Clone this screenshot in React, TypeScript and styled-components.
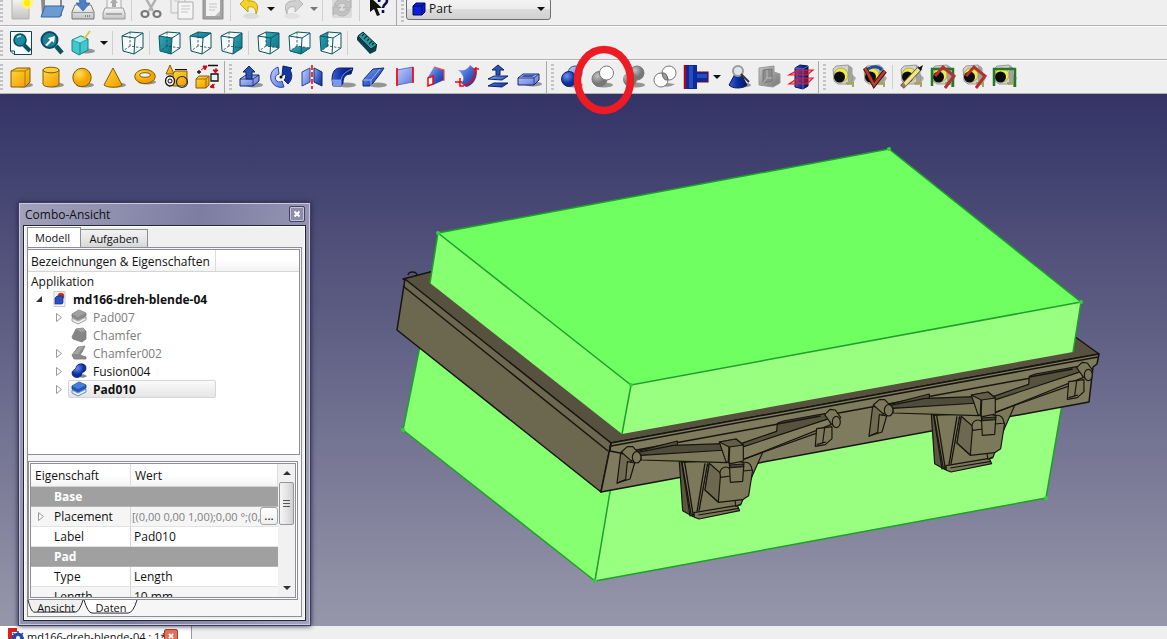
import React from "react";
import styled, { createGlobalStyle, css } from "styled-components";

const Global = createGlobalStyle`
  * { box-sizing: border-box; }
  body { margin: 0; overflow: hidden; background: #efefef; }
  body, button, select { font-family: "Open Sans", "Noto Sans", sans-serif; font-size: 12px; color: #111; }
  button { padding: 0; border: 0; background: none; }
`;

/* ---------- page frame ---------- */

const Page = styled.div`
  display: flex;
  flex-direction: column;
  height: 100vh;
  overflow: hidden;
`;

const ToolbarArea = styled.header`
  position: relative;
  margin-top: -8px;
  flex: none;
`;

const Toolbar = styled.div`
  display: flex;
  height: 34px;
  background: #efefef;
  border-top: 1px solid #fbfbfb;
  border-bottom: 1px solid #b2b2b4;
`;

const Group = styled.div<{ $last?: boolean }>`
  display: flex;
  align-items: center;
  padding-right: 2px;
  border-right: ${(p) => (p.$last ? "0" : "1px solid #a9a9a9")};
`;

const Handle = styled.span<{ $first?: boolean }>`
  width: 3px;
  height: 26px;
  margin: ${(p) => (p.$first ? "0 2px 0 0" : "0 2px 0 4px")};
  background: repeating-linear-gradient(#c2c2c6 0 2px, transparent 2px 4px);
`;

const ToolButton = styled.button`
  display: grid;
  place-items: center;
  width: 31px;
  height: 30px;
  svg { width: 24px; height: 24px; display: block; overflow: visible; }
`;

const MenuButton = styled.button`
  width: 12px;
  height: 30px;
  display: grid;
  place-items: center;
`;

const Triangle = styled.i<{ $dim?: boolean }>`
  border: 4px solid transparent;
  border-bottom: 0;
  border-top-color: ${(p) => (p.$dim ? "#777" : "#111")};
`;

const Separator = styled.span`
  width: 1px;
  height: 24px;
  margin: 0 3px 0 2px;
  background: #cfcfcf;
`;

const Workbench = styled.label`
  display: flex;
  align-items: center;
  width: 145px;
  height: 22px;
  padding: 0 5px;
  border: 1px solid #707070;
  border-radius: 3px;
  background: linear-gradient(#f4f4f4, #ececec 50%, #dcdcdc 50%, #d0d0d0);
  svg { width: 14px; height: 14px; flex: none; }
`;

const WorkbenchSelect = styled.select`
  flex: 1;
  appearance: none;
  border: 0;
  background: none;
  padding: 0 0 0 3px;
  line-height: 18px;
`;

const Ring = styled.svg`
  position: absolute;
  left: 573px;
  top: 53px;
  width: 62px;
  height: 70px;
  z-index: 5;
  pointer-events: none;
`;

const Viewport = styled.main`
  position: relative;
  flex: 1;
  min-height: 0;
  background: linear-gradient(#333366, #9797ab);
`;

const Scene = styled.svg`
  display: block;
  width: 100%;
  height: 100%;
`;

const DocumentBar = styled.nav`
  flex: none;
  height: 13px;
  overflow: hidden;
  background: #efefef;
`;

const DocumentTab = styled.div`
  display: flex;
  align-items: center;
  width: 192px;
  height: 20px;
  padding-left: 6px;
  background: #fff;
  border-right: 1px solid #999;
  > svg { width: 18px; height: 18px; }
`;

const DocumentName = styled.button`
  margin-left: 3px;
  width: 137px;
  text-align: left;
  font-size: 11px;
  white-space: nowrap;
`;

const DocumentClose = styled.button`
  width: 14px;
  height: 14px;
  border: 1px solid #a84030;
  border-radius: 2px;
  background: #e2725b;
  svg { display: block; width: 12px; height: 12px; }
`;

/* ---------- combo view window ---------- */

const Panel = styled.section`
  position: absolute;
  left: 18px;
  top: 108px;
  width: 293px;
  padding: 0 4px 4px;
  border: 1px solid #3c3c5a;
  background: linear-gradient(100deg, #a2a2bc, #7d7da2 50%, #a3a3bd);
  box-shadow: inset 0 0 0 1px #c9c9dc, 0 0 5px #26264c;
`;

const TitleBar = styled.div`
  display: flex;
  align-items: center;
  justify-content: space-between;
  height: 22px;
  padding: 0 1px 0 2px;
`;

const Title = styled.h1`
  margin: 0;
  font-size: 12px;
  font-weight: 400;
`;

const CloseButton = styled.button`
  width: 16px;
  height: 16px;
  border: 1px solid #41415e;
  border-radius: 2px;
  box-shadow: inset 0 0 0 1px #c4c4d8;
  background: #8c8cab;
  svg { display: block; width: 14px; height: 14px; }
`;

const PanelBody = styled.div`
  padding: 1px 3px 3px;
  border: 1px solid #24243a;
  background: #f0f0f0;
  box-shadow: inset 0 0 0 1px #fff;
`;

const TabRow = styled.div`
  display: flex;
  align-items: flex-end;
  height: 20px;
`;

const PanelTab = styled.button<{ $active?: boolean }>`
  border: 1px solid #8c8e94;
  border-bottom: 0;
  font-size: 11px;
  ${(p) =>
    p.$active
      ? css`
          width: 54px;
          height: 20px;
          padding-right: 3px;
          background: #fff;
        `
      : css`
          width: 67px;
          height: 18px;
          border-left: 0;
          background: linear-gradient(#f2f2f2, #e8e8e8 50%, #d6d6d6);
        `}
`;

const Pane = styled.div`
  padding: 1px 1px 1px 0;
  border: 1px solid #8c8e94;
  background: #f6f6f6;
`;

const TreeBox = styled.div`
  height: 206px;
  border: 1px solid #8c8e94;
  border-left: 0;
  background: #fff;
`;

const TreeHeader = styled.div`
  display: flex;
  height: 22px;
  border-bottom: 1px solid #d5d5d5;
  background: linear-gradient(#fff 50%, #f3f3f4);
  line-height: 23px;
`;

const TreeHeading = styled.span`
  width: 188px;
  padding-left: 3px;
  white-space: nowrap;
  border-right: 1px solid #dcdcdc;
`;

const Tree = styled.ul`
  margin: 0;
  padding: 0;
  list-style: none;
`;

const TreeRow = styled.li<{ $level: number }>`
  display: flex;
  align-items: center;
  height: 18px;
  padding-left: ${(p) => [3, 5, 25][p.$level]}px;
`;

const Expander = styled.span`
  width: 15px;
  height: 18px;
  flex: none;
  svg { display: block; width: 14px; height: 18px; }
`;

const TreeItem = styled.button<{ $dim?: boolean; $bold?: boolean; $selected?: boolean }>`
  display: flex;
  align-items: center;
  gap: 6px;
  height: 18px;
  padding: 0 0 0 2px;
  border: 1px solid transparent;
  border-radius: 2px;
  color: ${(p) => (p.$dim ? "#7c7c7c" : "#111")};
  font-weight: ${(p) => (p.$bold ? 700 : 400)};
  ${(p) =>
    p.$selected &&
    css`
      width: 148px;
      border-color: #d6d6d6;
      background: linear-gradient(#fafafa, #e6e6e6);
    `}
  svg { width: 16px; height: 16px; }
`;

const PropertyFrame = styled.div`
  width: 270px;
  margin-top: 6px;
  padding: 1px;
  border: 1px solid #8c8e94;
  background: #fff;
`;

const PropertyView = styled.div`
  display: flex;
  height: 135px;
  border: 1px solid #8c8e94;
  overflow: hidden;
`;

const Properties = styled.table`
  flex: 1;
  width: 100%;
  align-self: flex-start;
  table-layout: fixed;
  border-collapse: separate;
  border-spacing: 0;
  th, td { padding: 0; text-align: left; font-weight: 400; height: 20px; line-height: 19px; white-space: nowrap; overflow: hidden; }
`;

const HeadCell = styled.th<{ $first?: boolean }>`
  && {
    width: ${(p) => (p.$first ? "100px" : "auto")};
    height: 23px;
    padding-left: 4px;
    border-right: 1px solid #ddd;
    border-bottom: 1px solid #d5d5d5;
    background: linear-gradient(#fff 50%, #f3f3f4);
  }
`;

const GroupCell = styled.th`
  && {
    padding-left: 23px;
    border-bottom: 1px solid #b5b5b5;
    background: #a0a0a0;
    color: #fff;
    font-weight: 700;
  }
`;

const NameCell = styled.th<{ $alt?: boolean }>`
  && {
    border-right: 1px solid #d5d5d5;
    border-bottom: 1px solid #e2e2e2;
    background: ${(p) => (p.$alt ? "#f5f5f5" : "#fff")};
  }
`;

const NameContent = styled.span`
  display: flex;
  padding-left: 4px;
  height: 19px;
`;

const Indent = styled.span`
  width: 19px;
  flex: none;
  svg { display: block; width: 14px; height: 18px; }
`;

const ValueCell = styled.td<{ $alt?: boolean }>`
  && {
    padding-left: 3px;
    border-bottom: 1px solid #e2e2e2;
    background: ${(p) => (p.$alt ? "#f5f5f5" : "#fff")};
  }
`;

const PlacementValue = styled.span`
  display: flex;
  margin-left: -2px;
  color: #808080;
  span { flex: 1; min-width: 0; overflow: hidden; font-size: 11px; }
`;

const MoreButton = styled.button`
  width: 18px;
  height: 18px;
  border: 1px solid #a5a5a5;
  border-radius: 3px;
  background: linear-gradient(#fff, #eee);
  line-height: 12px;
`;

const ScrollBar = styled.div`
  display: flex;
  flex: none;
  flex-direction: column;
  align-items: center;
  width: 17px;
  background: #f1f1f1;
`;

const ScrollButton = styled.button<{ $down?: boolean }>`
  width: 17px;
  height: 18px;
  display: grid;
  place-items: center;
  margin-top: ${(p) => (p.$down ? "auto" : "0")};
  i {
    border: 4px solid transparent;
    ${(p) => (p.$down ? "border-bottom: 0; border-top-color: #333;" : "border-top: 0; border-bottom-color: #333;")}
  }
`;

const Thumb = styled.div`
  display: grid;
  place-items: center;
  width: 15px;
  height: 43px;
  border: 1px solid #979797;
  border-radius: 2px;
  background: linear-gradient(90deg, #f5f5f5, #e5e5e5 50%, #cfcfcf);
  span { width: 7px; height: 8px; background: repeating-linear-gradient(#555 0 1px, transparent 1px 3px); }
`;

const BottomTabs = styled.div`
  display: flex;
  height: 15px;
`;

const BottomTab = styled.button<{ $active?: boolean }>`
  position: relative;
  width: ${(p) => (p.$active ? "54px" : "56px")};
  height: 14px;
  line-height: 13px;
  font-size: 11px;
  white-space: nowrap;
  svg { position: absolute; left: 0; top: 0; width: 100%; height: 100%; overflow: visible; }
  span { position: relative; }
`;

/* ---------- icons ---------- */

type G = { children?: React.ReactNode };
const Ic = ({ children }: G) => <svg viewBox="0 0 24 24" aria-hidden="true">{children}</svg>;
const Shade = ({ x = 14, y = 20 }: { x?: number; y?: number }) => <ellipse cx={x} cy={y} rx="9" ry="2.6" fill="#777" opacity=".75" />;

const PaintDefs = styled.svg`
  position: absolute;
  width: 0;
  height: 0;
`;

const SharedPaint = () => (
  <PaintDefs aria-hidden="true">
    <defs>
      <linearGradient id="yel" x1="0" y1="0" x2="1" y2="1"><stop stopColor="#ffd83a" /><stop offset="1" stopColor="#f09a00" /></linearGradient>
      <linearGradient id="blu" x1="0" y1="0" x2="1" y2="1"><stop stopColor="#8fb2f4" /><stop offset=".5" stopColor="#3c62cf" /><stop offset="1" stopColor="#102a86" /></linearGradient>
      <linearGradient id="dblu" x1="0" y1="0" x2="1" y2="0"><stop stopColor="#3a5fc9" /><stop offset=".5" stopColor="#0b2da0" /><stop offset="1" stopColor="#04175f" /></linearGradient>
      <linearGradient id="lav" x1="0" y1="0" x2="1" y2="1"><stop stopColor="#c3cdfa" /><stop offset="1" stopColor="#5b77dc" /></linearGradient>
      <linearGradient id="gry" x1="0" y1="0" x2="1" y2="1"><stop stopColor="#c4c4c4" /><stop offset="1" stopColor="#777" /></linearGradient>
      <linearGradient id="pale" x1="0" y1="0" x2="0" y2="1"><stop stopColor="#fafafa" /><stop offset="1" stopColor="#c2c2c2" /></linearGradient>
      <linearGradient id="teal" x1="0" y1="0" x2="1" y2="1"><stop stopColor="#2fa9b8" /><stop offset="1" stopColor="#0f7488" /></linearGradient>
      <radialGradient id="ballY" cx=".35" cy=".3"><stop stopColor="#ffe057" /><stop offset="1" stopColor="#f5a300" /></radialGradient>
      <radialGradient id="ballB" cx=".35" cy=".3"><stop stopColor="#6c94f2" /><stop offset="1" stopColor="#0b2c9c" /></radialGradient>
      <radialGradient id="ballG" cx=".35" cy=".3"><stop stopColor="#c2c2c2" /><stop offset="1" stopColor="#777" /></radialGradient>
    </defs>
  </PaintDefs>
);

const NewDoc = () => <Ic><path d="M3 0h17v22H3z" fill="url(#pale)" stroke="#b5b5a5" /><circle cx="18" cy="6" r="6" fill="#fff26a" opacity=".8" /><circle cx="18" cy="6" r="3" fill="#ffea00" /></Ic>;
const OpenDoc = () => <Ic><path d="M1 2h10l2-3h9v20H2z" fill="#8a8a8a" /><path d="M5 0h15v10H5z" fill="#eee" /><path d="M5 9h19l-4 11H1z" fill="#6c9ad2" stroke="#3465a4" /></Ic>;
const SaveDoc = () => <Ic><path d="M4 8h16l3 7v7H1v-7z" fill="url(#pale)" stroke="#777" /><path d="M2 15.500h20" stroke="#999" /><path d="M4 0c6-3 11 0 11 6h4l-7 8-7-8h4c0-3-2-5-5-6z" fill="#4c7fc4" stroke="#2b5794" strokeWidth=".7" /><path d="M14 19h6" stroke="#888" strokeDasharray="1 1" strokeWidth="2" /></Ic>;
const PrintDoc = () => <Ic><path d="M5 0h14v12H5z" fill="#f3f3f3" stroke="#aaa" /><path d="M12 1l4 5h-2v4h-4V6H8z" fill="#aaa" /><path d="M3 11h18l2 5v6H1v-6z" fill="url(#pale)" stroke="#9a9a9a" /><path d="M4 17h16" stroke="#aaa" strokeWidth="2" /></Ic>;
const Cut = () => <Ic><path d="M6 0l8 14M18 0l-8 14" stroke="#b0b0b0" strokeWidth="2.400" /><ellipse cx="6" cy="17" rx="3.500" ry="3" fill="none" stroke="#777" strokeWidth="2.200" /><ellipse cx="18" cy="17" rx="3.500" ry="3" fill="none" stroke="#777" strokeWidth="2.200" /></Ic>;
const Copy = () => <Ic><path d="M1 0h14v16H1z" fill="#eee" stroke="#bbb" /><path d="M8 5h15v17H8z" fill="#f5f5f5" stroke="#aaa" /><path d="M11 9h9M11 12h9M11 15h7M4 4h6" stroke="#c4c4c4" /></Ic>;
const Paste = () => <Ic><path d="M2 0h20v22H2z" fill="#a3a3a3" stroke="#8c8c8c" /><path d="M5 3h14v16H5z" fill="#f2f2f2" /><path d="M8 7h8M8 10h8M8 13h6" stroke="#c4c4c4" /><path d="M14 19l5-5v5z" fill="#bbb" /></Ic>;
const Undo = () => <Ic><ellipse cx="13" cy="19" rx="8" ry="3" fill="#ddd" /><path d="M2 7l8-8v5c8-1 12 4 8 13 0-6-3-8-8-7v5z" fill="#f3d22d" stroke="#c7a100" /></Ic>;
const Redo = () => <Ic><ellipse cx="11" cy="19" rx="8" ry="3" fill="#e2e2e2" /><path d="M22 7l-8-8v5C6 3 2 8 6 17c0-6 3-8 8-7v5z" fill="#d0d0d0" stroke="#b6b6b6" /></Ic>;
const Refresh = () => <Ic><rect x="2" y="0" width="20" height="21" rx="2" fill="#dadada" /><path d="M4 9c1-8 11-9 14-4l3-2v8h-8l3-3c-3-3-7-2-8 1zM20 12c-1 8-11 9-14 4l-3 2v-8h8l-3 3c3 3 7 2 8-1z" fill="#c2c2c2" stroke="#a4a4a4" strokeWidth=".6" /></Ic>;
const WhatsThis = () => <Ic><path d="M3 0v15l4-3 3 7 3-1-3-7h5z" fill="#111" /><path d="M12 5c0-6 8-5 8-1 0 3-4 3-4 7M16 13v3" stroke="#0a0a5e" strokeWidth="2.600" fill="none" /></Ic>;

const FitAll = () => <Ic><path d="M1.500.500h21v23H5l-3.500-3.500z" fill="#f7fbfb" stroke="#0d4650" /><path d="M1.500 20h4v3.500" fill="none" stroke="#0d4650" /><circle cx="11" cy="9" r="6" fill="#1a8ca4" stroke="#0b4b5c" strokeWidth="1.600" /><path d="M8 6.500q2-2 4-1.500" stroke="#b9edf5" strokeWidth="1.500" fill="none" /><path d="M15 14l6 6" stroke="#0b5364" strokeWidth="4" /></Ic>;
const FitSelection = () => <Ic><circle cx="9.500" cy="9" r="8" fill="#1a8298" stroke="#0b4b5c" strokeWidth="2" /><path d="M5 14l5-5-2-2 7-2-1 7-2-2-5 5z" fill="#fff" /><path d="M16 15l6 7" stroke="#0b5364" strokeWidth="4.500" /></Ic>;
const DrawStyle = () => <Ic><Shade x={15} y={20} /><path d="M1 9l9-4 7 3v11l-9 5-7-4z" fill="#3ec9cc" stroke="#237f85" /><path d="M1 9l9-4 7 3-8 4z" fill="#8ff2ea" stroke="#237f85" strokeWidth=".7" /><path d="M9 12v11" stroke="#237f85" /><path d="M13 8l6-8" stroke="#d9c63b" strokeWidth="1.800" /></Ic>;

const cubeFaces: Record<string, string> = {
  axo: "",
  front: "2 5 15 7 14 23 3 20",
  top: "2 5 10 1 23 2 15 7",
  right: "15 7 23 2 23 17 14 23",
  rear: "10 1 23 2 23 17 10 15",
  bottom: "3 20 10 15 23 17 14 23",
  left: "2 5 10 1 10 15 3 20",
};
const ViewCube = ({ face }: { face: string }) => (
  <Ic>
    <path d="M2 5l8-4 13 1v15l-9 6-11-3z" fill="#f7fafa" />
    <polygon points={cubeFaces[face]} fill="url(#teal)" />
    <path d="M10 1v14l13 2M10 15l-7 5" fill="none" stroke="#27434a" strokeWidth=".8" strokeDasharray="2.500 1.500" />
    <path d="M2 5l8-4 13 1v15l-9 6-11-3zM2 5l13 2 8-5M15 7l-1 16" fill="none" stroke="#0c5563" strokeWidth="1" strokeLinejoin="round" />
  </Ic>
);
const Measure = () => <Ic><path d="M2 6l6-5 14 14-1 5-6 3L2 9z" fill="#0c4149" /><path d="M3 5l5-4 14 13-6 4z" fill="#279aa8" stroke="#0a2a30" /><path d="M9 3l-2 2M12 5l-3 3M14 8l-2 2M17 10l-3 3M19 12l-2 2" stroke="#05252b" strokeWidth="1.100" /></Ic>;

const Box = () => <Ic><Shade x={15} /><path d="M2 6l6-3h13v14l-5 5H2z" fill="url(#yel)" stroke="#845d00" /><path d="M2 6h14v16M16 6l5-3" fill="none" stroke="#9b6b00" strokeWidth=".8" /></Ic>;
const Cylinder = () => <Ic><Shade x={15} /><path d="M3 5v14c0 4 16 4 16 0V5" fill="url(#yel)" stroke="#845d00" /><ellipse cx="11" cy="5" rx="8" ry="2.800" fill="#ffd23a" stroke="#845d00" /></Ic>;
const Sphere = () => <Ic><Shade x={14} /><circle cx="11" cy="12.500" r="9.200" fill="url(#ballY)" stroke="#845d00" /></Ic>;
const Cone = () => <Ic><Shade x={15} /><path d="M11 3l9 17c-3 3-15 3-18 0z" fill="url(#yel)" stroke="#845d00" /></Ic>;
const Torus = () => <Ic><Shade x={14} y={17} /><ellipse cx="12" cy="11.500" rx="10.300" ry="7" fill="url(#ballY)" stroke="#845d00" /><ellipse cx="12" cy="10" rx="5.500" ry="2.300" fill="#eee" stroke="#845d00" /></Ic>;
const Primitives = () => <Ic><path d="M6 0l4 9H2z" fill="url(#yel)" stroke="#845d00" /><path d="M9 9l2-3h12v12l-3 3H9z" fill="url(#yel)" stroke="#845d00" /><path d="M11 4.500h12" stroke="#111" /><ellipse cx="6" cy="16" rx="4.500" ry="5" fill="#efefef" stroke="#111" strokeWidth="1.300" /><circle cx="6" cy="16" r="2" fill="none" stroke="#111" /><circle cx="18" cy="17" r="5.500" fill="none" stroke="#26264f" strokeWidth="1.200" /></Ic>;
const ShapeBuilder = () => <Ic><path d="M1 14l3-3h10v9l-3 3H1z" fill="url(#yel)" stroke="#845d00" /><path d="M1 14h10v9M11 14l3-3" fill="none" stroke="#845d00" strokeWidth=".8" /><path d="M2 7h4M4 5v4M13 .500h10M16 9h7v7h-7z" stroke="#111" fill="none" strokeWidth="1.300" /><path d="M6 5l4-3M8 1l4 0-2 4zM21 3v3M18 5h5l-2.500 3zM20 19l-3 2M19 23l-4-1 3-3z" fill="#d40016" stroke="#d40016" /></Ic>;

const Extrude = () => <Ic><Shade x={16} /><path d="M2 14l6-4h13v6l-6 5H2z" fill="url(#lav)" stroke="#14286f" /><path d="M2 14h13l6-4M15 14v7" fill="none" stroke="#14286f" strokeWidth=".8" /><path d="M11 1l6 6h-3v7H8V7H5z" fill="#2855b5" stroke="#12265f" /></Ic>;
const Revolve = () => <Ic><path d="M9 2a10 10 0 1 0 6 20l-2-6a4 4 0 1 1-3-7z" fill="url(#lav)" stroke="#2a4db1" /><path d="M14 1l9 2-2 2c3 5 2 10-2 14l-4-4c2-2 2-4 1-6l-3 2z" fill="#1536a0" stroke="#0d2371" /><circle cx="12" cy="12" r="1.500" fill="#111" /></Ic>;
const Mirror = () => <Ic><path d="M2 7l8-4v14l-8 4z" fill="url(#lav)" stroke="#27469b" /><path d="M14 3l8 4v14l-8-4z" fill="url(#blu)" stroke="#12265f" /><path d="M12 0v24" stroke="#f00" strokeWidth="1.600" strokeDasharray="5 2" /></Ic>;
const Fillet = () => <Ic><Shade x={16} /><path d="M1 15C1 7 4 3 9 3h13l-2 6c-5 0-8 3-8 9l-2 3H2z" fill="url(#dblu)" stroke="#10236a" /><path d="M1 15h9v6H2z" fill="#7d98ea" /><path d="M1 15h9v6M10 15C11 10 14 7 21 4" fill="none" stroke="#91aaf0" strokeWidth=".8" /></Ic>;
const Chamfer = () => <Ic><Shade x={16} /><path d="M1 15L11 4l11-1-4 6-7 9-3 3H1z" fill="url(#blu)" stroke="#10236a" /><path d="M1 15h8l9-11M9 15v6" fill="none" stroke="#b8c8ff" strokeWidth=".8" /></Ic>;
const RuledSurface = () => <Ic><path d="M4 5l16-3v15L4 20z" fill="url(#lav)" stroke="#5672ce" /><path d="M4 3v18M20 2v16" stroke="#f00" strokeWidth="1.600" /></Ic>;
const Loft = () => <Ic><path d="M4 12l6-10 10 3v10L9 20z" fill="url(#blu)" /><path d="M10 2l10 3v11" stroke="#f44" fill="none" strokeWidth="1.200" /><path d="M4 13l5-2v8l-5 2z" fill="#fff" stroke="#f00" strokeWidth="1.500" /></Ic>;
const Sweep = () => <Ic><path d="M3 5c7 1 10-1 12-5l7 6c0 9-5 15-11 16l-5-4c4-3 3-8-3-13z" fill="url(#blu)" /><path d="M0 17h7M5 13v8h4M9 20c7 0 12-9 12-18M18 4h6" stroke="#f00" fill="none" strokeWidth="1.500" /></Ic>;
const Offset = () => <Ic><path d="M12 0l6 5h-4v5h-4V5H6z" fill="#2855b5" stroke="#12265f" /><path d="M2 14l6-3h14l-6 4zM2 21l6-3h14l-6 4z" fill="url(#blu)" stroke="#10236a" /></Ic>;
const Thickness = () => <Ic><Shade x={16} y={19} /><path d="M1 13l5-4h16v6l-5 5H1z" fill="url(#lav)" stroke="#14286f" /><path d="M1 13h16v7M17 13l5-4" fill="none" stroke="#14286f" strokeWidth=".8" /><path d="M4 12l3-2h11l-3 2z" fill="#3457b8" /></Ic>;

const BooleanOp = () => <Ic><Shade /><circle cx="15" cy="8" r="7" fill="url(#lav)" stroke="#2b4db0" /><circle cx="9" cy="14" r="7.500" fill="url(#ballB)" stroke="#12265f" /></Ic>;
const CutOp = () => <Ic><Shade x={13} y={20} /><circle cx="8.500" cy="14" r="7.500" fill="url(#ballG)" stroke="#777" /><circle cx="15.500" cy="8" r="7" fill="#fff" stroke="#777" /></Ic>;
const UnionOp = () => <Ic><Shade x={14} y={20} /><circle cx="15" cy="8" r="7" fill="url(#ballG)" stroke="#777" /><circle cx="8" cy="14.500" r="7" fill="url(#ballG)" /></Ic>;
const CommonOp = () => <Ic><path d="M9 21q8 2 13-2l-7-1z" fill="#999" /><circle cx="16" cy="8" r="7" fill="#fff" stroke="#777" /><circle cx="8" cy="15" r="7" fill="#fff" stroke="#777" /><path d="M9 8q5-1 6 7-5 1-6-7z" fill="#999" stroke="#666" /></Ic>;
const Join = () => <Ic><path d="M0 0h13v7h11v10H13v7H0z" fill="#0c2a9c" /><path d="M5 1h4v22H5zM13 9h10v4H13z" fill="#2f5ed0" opacity=".7" /><path d="M1 0v24" stroke="#a00b24" strokeWidth="2.500" /><path d="M13 7h11v10H13" fill="none" stroke="#6c0d33" strokeWidth="1.200" /></Ic>;
const Check = () => <Ic><Shade x={15} /><path d="M8 9h6l6 11c-4 4-15 4-18 0z" fill="url(#dblu)" stroke="#0c1d60" /><circle cx="11" cy="6" r="5" fill="#dfe3ea" stroke="#9b9b9b" strokeWidth="2" /><path d="M14 9l8 8" stroke="#333" strokeWidth="2" /></Ic>;
const CrossSection = () => <Ic><path d="M1 3l15-2v6l6 2v9l-7 4-14-2z" fill="url(#gry)" stroke="#999" /><path d="M5 5l9-1v12l-9 2z" fill="#8c8c8c" stroke="#777" /><path d="M5 18l4-5h5M9 13V5" fill="none" stroke="#bbb" /></Ic>;
const Slices = () => <Ic><path d="M6 3l5-3 8 1v20l-5 3-8-2z" fill="url(#dblu)" stroke="#061448" /><path d="M6 3l8 1 5-3M14 4v20" fill="none" stroke="#496dd2" /><path d="M0 10h18l6-5H9zM0 19h18l6-6H9z" fill="#f22" fillOpacity=".4" stroke="#f01428" strokeWidth="1.200" /></Ic>;

const Tape = () => (
  <>
    <path d="M17 6l7 7-4 7h-5z" fill="#aaa" />
    <path d="M1 4l3-3 12-1 4 3v13l-4 3H6l-4-3z" fill="#d2d2d2" stroke="#858585" strokeWidth=".8" />
    <path d="M16 0l4 3v13l-4 3V4z" fill="#a2a2a2" />
    <circle cx="9" cy="10" r="7" fill="#efe94a" stroke="#8b8830" strokeWidth=".6" />
    <circle cx="7.500" cy="12" r="5.500" fill="#0c0c0c" />
    <path d="M14 18h7v4" stroke="#a9a555" strokeWidth="2" fill="none" />
  </>
);
const RedFrame = () => <path d="M4 11l8-9 11 9-9 12" fill="none" stroke="#b23131" strokeWidth="3" />;
const GreenFrame = () => <path d="M1 21V4h21v18" fill="none" stroke="#227a28" strokeWidth="2.500" />;
const MeasureLinear = () => <Ic><Tape /></Ic>;
const MeasureAngular = () => <Ic><Tape /><path d="M5 4q8-5 14 1" stroke="#1a4aa2" fill="none" strokeWidth="3" /><path d="M2 3l9 17L22 6" fill="none" stroke="#3c1410" strokeWidth="4.500" /><path d="M2 3l9 17L22 6" fill="none" stroke="#bd3d32" strokeWidth="2.500" /></Ic>;
const MeasureClear = () => <Ic><Tape /><path d="M2 22L20 3" stroke="#555" strokeWidth="5" /><path d="M4 20L19 4" stroke="#efe584" strokeWidth="3.500" /><path d="M18 3l5-3-2 6z" fill="#111" /><path d="M1 20l3-2 2 3-2 2z" fill="#a7745d" /></Ic>;
const MeasureToggleAll = () => <Ic><Tape /><GreenFrame /><RedFrame /></Ic>;
const MeasureToggle3d = () => <Ic><Tape /><RedFrame /></Ic>;
const MeasureToggleDelta = () => <Ic><Tape /><GreenFrame /></Ic>;

const SmallPad = ({ dim }: { dim?: boolean }) => <svg viewBox="0 0 16 16"><path d="M1 9l6 3 8-4v3l-8 4-6-3z" fill={dim ? "#eee" : "#e8eefc"} stroke={dim ? "#888" : "#4b6fbd"} strokeWidth=".8" /><path d="M1 5l7-4 7 3v3l-8 4-6-3z" fill={dim ? "#8b8b8b" : "#1f5ac0"} stroke={dim ? "#777" : "#173b85"} strokeWidth=".8" /><path d="M1 5l7-4 7 3-8 4z" fill={dim ? "#a0a0a0" : "#4580dc"} /></svg>;
const SmallChamfer = () => <svg viewBox="0 0 16 16"><path d="M1 10l4-8 7-1 3 3v8l-4 3-9-3z" fill="#858585" stroke="#777" strokeWidth=".8" /><path d="M5 2l7-1 3 3-5 1z" fill="#a0a0a0" /></svg>;
const SmallChamferCut = () => <svg viewBox="0 0 16 16"><path d="M1 10l6-8 7-1-3 6-2 3 6 2v2H3z" fill="#8b8b8b" stroke="#777" strokeWidth=".8" /><path d="M2 9l6-7 5-1-6 8z" fill="#a5a5a5" /></svg>;
const SmallFusion = () => <svg viewBox="0 0 16 16"><path d="M8 14q6 2 8-1l-4-2z" fill="#888" /><path d="M5 5c0-5 10-6 10 0 0 4-3 4-4 5 0 6-10 6-10 0 0-3 3-3 4-5z" fill="url(#ballB)" stroke="#0b2577" strokeWidth=".8" /></svg>;
const SmallDocument = () => <svg viewBox="0 0 16 16"><path d="M3 .500h11v15H3z" fill="#f5f5f5" stroke="#c9c9c9" /><circle cx="10" cy="5" r="3.200" fill="#c92d26" /><path d="M4 7l2-2h6v7l-1 1H4z" fill="#2a4fc0" stroke="#122d7f" strokeWidth=".7" /></svg>;
const Collapsed = () => <svg viewBox="0 0 14 18"><path d="M3.500 5.500l5 4-5 4z" fill="#fff" stroke="#999" /></svg>;
const Expanded = () => <svg viewBox="0 0 14 18"><path d="M9 6v6H3z" fill="#333" /></svg>;
const Cross = ({ color }: { color: string }) => <svg viewBox="0 0 14 14"><path d="M4.500 4.500l5 5M9.500 4.500l-5 5" stroke={color} strokeWidth="2" /></svg>;

/* ---------- toolbar contents ---------- */

type Tool = [string, React.FC] | "sep" | "menu" | "menuDim";

const cube = (face: string): React.FC => () => <ViewCube face={face} />;

const fileTools: Tool[] = [
  ["Neu", NewDoc], ["Öffnen", OpenDoc], ["Speichern", SaveDoc], ["Drucken", PrintDoc], "sep",
  ["Ausschneiden", Cut], ["Kopieren", Copy], ["Einfügen", Paste], "sep",
  ["Rückgängig", Undo], "menu", ["Wiederherstellen", Redo], "menuDim", "sep",
  ["Aktualisieren", Refresh], "sep", ["Direkthilfe", WhatsThis],
];
const viewTools: Tool[] = [
  ["Alles einpassen", FitAll], ["Auswahl einpassen", FitSelection], ["Darstellung", DrawStyle], "menu", "sep",
  ["Axonometrisch", cube("axo")], "sep",
  ["Vorne", cube("front")], ["Oben", cube("top")], ["Rechts", cube("right")], "sep",
  ["Hinten", cube("rear")], ["Unten", cube("bottom")], ["Links", cube("left")], "sep",
  ["Abstand messen", Measure],
];
const partGroups: Tool[][] = [
  [["Würfel", Box], ["Zylinder", Cylinder], ["Kugel", Sphere], ["Kegel", Cone], ["Torus", Torus], ["Grundkörper", Primitives], ["Formgenerator", ShapeBuilder]],
  [["Extrudieren", Extrude], ["Rotieren", Revolve], ["Spiegeln", Mirror], ["Verrunden", Fillet], ["Fasen", Chamfer], ["Regelfläche", RuledSurface], ["Loft", Loft], ["Sweep", Sweep], ["Versatz", Offset], ["Dicke", Thickness]],
  [["Boolesche Operation", BooleanOp], ["Schneiden", CutOp], ["Vereinigung", UnionOp], ["Schnittmenge", CommonOp], ["Verbinden", Join], "menu", ["Geometrie prüfen", Check], ["Schnitt", CrossSection], ["Querschnitte", Slices]],
  [["Linear messen", MeasureLinear], ["Winkel messen", MeasureAngular], "sep", ["Messungen löschen", MeasureClear], ["Alle umschalten", MeasureToggleAll], ["3D umschalten", MeasureToggle3d], ["Delta umschalten", MeasureToggleDelta]],
];

const Tools = ({ items }: { items: Tool[] }) => (
  <>
    {items.map((item, i) => {
      if (item === "sep") return <Separator key={i} />;
      if (item === "menu" || item === "menuDim")
        return <MenuButton key={i} aria-label="Menü"><Triangle $dim={item === "menuDim"} /></MenuButton>;
      const [label, Icon] = item;
      return <ToolButton key={i} aria-label={label}><Icon /></ToolButton>;
    })}
  </>
);

/* ---------- 3D model ---------- */

/* One hinge with its two pins, drawn in units of a third of a scene unit. */
const Hinge = ({ x, y }: { x: number; y: number }) => (
  <g transform={`translate(${x} ${y}) scale(.3333)`} stroke="#16150f" strokeWidth="3.500" fill="#7c785a" strokeLinejoin="round">
    <path d="M238 185l10 147 32 18 30-10-22-155z" fill="#5a5642" />
    <path d="M245 187l78-4 167-30-32 72-36 90-135 25-17 8z" />
    <path d="M246 187l28 160M254 187l26 160M315 190l-24 145M323 190l-26 143" strokeWidth="4" />
    <path d="M282 338l130-22 7 16-122 25-14-5zM295 345l122-20" />
    <path d="M404 297l4 22 14-7" />
    <path d="M328 190l34 30 96-10-12 77-18 12-73 8-40-37z" />
    <path d="M328 190l34 30-7 86-40-36z" fill="#6d6950" />
    <path d="M360 220c0-18 26-28 32-8v16l-30 4zM420 190q34-12 36 22" />
    <path d="M388 188l12-8 32 8-4 56-37 3z" />
    <path d="M390 195l40-3v8l-40 3z" fill="#4d4a39" />
    <path d="M62 160l42 4-14 26-10 48-29 12z" fill="#706c51" />
    <path d="M82 185l-5 54-25 10 38-12 14-48z" />
    <path d="M112 154l120-31v14l-30 5" fill="#55513e" />
    <path d="M110 158l110-22 150-5 12 22-262 14z" fill="#4f4c3b" />
    <path d="M122 166l258-16v38l-256-8z" />
    <path d="M64 156l18-16 16 0 24 25-14 22-16-6z" />
    <ellipse cx="110" cy="172" rx="13" ry="17" />
    <path d="M425 130l105-36 2-24 18-7 125-22 12 18-260 86z" fill="#55523e" />
    <path d="M425 142l262-86 6 18-264 105z" fill="#827e60" />
    <path d="M430 178l258-92" />
    <path d="M532 72l130-24" fill="none" strokeWidth="5" />
    <path d="M358 126l50-9 22 18v48l-38 8-14-6z" />
    <path d="M358 126l50-9 22 18-42 6z" fill="#625e48" />
    <path d="M388 141l-2 48" strokeWidth="6" />
    <path d="M650 86l46-6 0 36-20 18-30 5zM674 84l-6 45M650 134l28-8" />
    <path d="M674 44l16-16 16 2 16 22-16 28-12-8z" />
    <ellipse cx="709" cy="66" rx="12" ry="17" />
  </g>
);

const Model = () => (
  <Scene viewBox="0 94 1167 532" preserveAspectRatio="xMinYMin slice" role="img" aria-label="3D-Modell">
    <g stroke="#1ea02a" strokeWidth="1.500" strokeLinejoin="round">
      <path d="M424 326L403 430l192 151 17-91z" fill="#86ff70" />
      <path d="M612 480l-17 101 451-83 18-105z" fill="#99ff80" />
    </g>
    <g stroke="#16150f" strokeWidth="1.500" strokeLinejoin="round">
      <path d="M403 279l31-8 640 65 25 18-488 89z" fill="#57523f" />
      <path d="M408 275c1-4 8-4 9 0" fill="none" />
      <path d="M405 279l206 164-10 49-204-162z" fill="#6b684f" />
      <path d="M403 286l205 165" fill="none" />
      <path d="M611 443l488-89-2 10-4 3-4 35-488 90z" fill="#7f7b5e" />
      <path d="M611 446l487-89M611 443l-1 8 10 2 460-84" fill="none" />
    </g>
    <Hinge x={600} y={400} />
    <Hinge x={852} y={353} />
    <path d="M438 233L889 149 1081 302 631 385z" fill="#70ff60" />
    <path d="M438 233L631 385 622 434 430 283z" fill="#86ff70" />
    <path d="M631 385L1081 302 1073 352 622 434z" fill="#99ff80" />
    <path d="M430 283L438 233 889 149 1081 302 1073 352M438 233L631 385 1081 302M631 385l-9 49" fill="none" stroke="#1ea02a" strokeWidth="1.500" />
    <g fill="#2ed33b">
      <circle cx="438" cy="233" r="2" /><circle cx="889" cy="149" r="2" /><circle cx="1081" cy="302" r="2" /><circle cx="631" cy="385" r="2" />
      <circle cx="403" cy="430" r="2" /><circle cx="595" cy="581" r="2" /><circle cx="1046" cy="498" r="2" />
    </g>
  </Scene>
);

/* ---------- combo view ---------- */

type Node = { name: string; icon: React.ReactNode; dim?: boolean; leaf?: boolean; selected?: boolean };
const nodes: Node[] = [
  { name: "Pad007", icon: <SmallPad dim />, dim: true },
  { name: "Chamfer", icon: <SmallChamfer />, dim: true, leaf: true },
  { name: "Chamfer002", icon: <SmallChamferCut />, dim: true },
  { name: "Fusion004", icon: <SmallFusion /> },
  { name: "Pad010", icon: <SmallPad />, selected: true },
];

const ComboView = () => (
  <Panel aria-label="Combo-Ansicht">
    <TitleBar>
      <Title>Combo-Ansicht</Title>
      <CloseButton aria-label="Schließen"><Cross color="#fff" /></CloseButton>
    </TitleBar>
    <PanelBody>
      <TabRow role="tablist">
        <PanelTab role="tab" aria-selected $active>Modell</PanelTab>
        <PanelTab role="tab" aria-selected={false}>Aufgaben</PanelTab>
      </TabRow>
      <Pane>
        <TreeBox>
          <TreeHeader><TreeHeading>Bezeichnungen &amp; Eigenschaften</TreeHeading></TreeHeader>
          <Tree>
            <TreeRow $level={0}>Applikation</TreeRow>
            <TreeRow $level={1}>
              <Expander><Expanded /></Expander>
              <TreeItem $bold><SmallDocument />md166-dreh-blende-04</TreeItem>
            </TreeRow>
            {nodes.map((n) => (
              <TreeRow key={n.name} $level={2}>
                <Expander>{!n.leaf && <Collapsed />}</Expander>
                <TreeItem $dim={n.dim} $bold={n.selected} $selected={n.selected}>{n.icon}{n.name}</TreeItem>
              </TreeRow>
            ))}
          </Tree>
        </TreeBox>
        <PropertyFrame>
          <PropertyView>
            <Properties>
              <thead><tr><HeadCell $first>Eigenschaft</HeadCell><HeadCell>Wert</HeadCell></tr></thead>
              <tbody>
                <tr><GroupCell colSpan={2}>Base</GroupCell></tr>
                <tr>
                  <NameCell $alt><NameContent><Indent><Collapsed /></Indent>Placement</NameContent></NameCell>
                  <ValueCell $alt><PlacementValue><span>[(0,00 0,00 1,00);0,00 °;(0,</span><MoreButton aria-label="Bearbeiten">...</MoreButton></PlacementValue></ValueCell>
                </tr>
                <tr><NameCell><NameContent><Indent />Label</NameContent></NameCell><ValueCell>Pad010</ValueCell></tr>
                <tr><GroupCell colSpan={2}>Pad</GroupCell></tr>
                <tr><NameCell><NameContent><Indent />Type</NameContent></NameCell><ValueCell>Length</ValueCell></tr>
                <tr><NameCell $alt><NameContent><Indent />Length</NameContent></NameCell><ValueCell $alt>10 mm</ValueCell></tr>
              </tbody>
            </Properties>
            <ScrollBar>
              <ScrollButton aria-label="Nach oben"><i /></ScrollButton>
              <Thumb><span /></Thumb>
              <ScrollButton $down aria-label="Nach unten"><i /></ScrollButton>
            </ScrollBar>
          </PropertyView>
        </PropertyFrame>
        <BottomTabs role="tablist">
          <BottomTab role="tab" aria-selected={false}>
            <svg viewBox="0 0 58 15" preserveAspectRatio="none"><path d="M0 0q3 12 6 13h43q4 0 8-13" fill="#f0f0f0" stroke="#222" /></svg>
            <span>Ansicht</span>
          </BottomTab>
          <BottomTab role="tab" aria-selected $active>
            <svg viewBox="0 0 54 15" preserveAspectRatio="none"><path d="M0 0q4 14 8 14h36q5 0 9-14" fill="#fff" stroke="#222" /></svg>
            <span>Daten</span>
          </BottomTab>
        </BottomTabs>
      </Pane>
    </PanelBody>
  </Panel>
);

export default function App() {
  return (
    <Page>
      <Global />
      <SharedPaint />
      <ToolbarArea>
        <Toolbar role="toolbar" aria-label="Datei">
          <Group><Handle $first /><Tools items={fileTools} /></Group>
          <Group $last>
            <Handle />
            <Workbench>
              <svg viewBox="0 0 14 14" aria-hidden="true"><path d="M1 4l3-3h9v9l-3 3H1z" fill="#0c1fe0" stroke="#000a52" /><path d="M1 4h9v9M10 4l3-3" fill="none" stroke="#000a52" /></svg>
              <WorkbenchSelect aria-label="Arbeitsbereich" defaultValue="Part"><option>Part</option></WorkbenchSelect>
              <Triangle />
            </Workbench>
          </Group>
        </Toolbar>
        <Toolbar role="toolbar" aria-label="Ansicht">
          <Group $last><Handle $first /><Tools items={viewTools} /></Group>
        </Toolbar>
        <Toolbar role="toolbar" aria-label="Part">
          {partGroups.map((g, i) => (
            <Group key={i} $last={i === partGroups.length - 1}><Handle $first={i === 0} /><Tools items={g} /></Group>
          ))}
        </Toolbar>
        <Ring viewBox="0 0 62 70" aria-hidden="true"><ellipse cx="31" cy="35" rx="26.500" ry="30.500" fill="none" stroke="#ed1c24" strokeWidth="7.500" /></Ring>
      </ToolbarArea>
      <Viewport>
        <Model />
        <ComboView />
      </Viewport>
      <DocumentBar>
        <DocumentTab>
          <svg viewBox="0 0 18 18" aria-hidden="true"><path d="M2 1h9v4H6v3h4v3H6v6H2z" fill="#d8201c" /><circle cx="12" cy="11" r="4" fill="none" stroke="#2348a8" strokeWidth="3" /><path d="M12 4v14M5 11h14M7 6l10 10M17 6L7 16" stroke="#2348a8" strokeWidth="1.500" /><circle cx="12" cy="11" r="2" fill="#fff" /></svg>
          <DocumentName>md166-dreh-blende-04 : 1*</DocumentName>
          <DocumentClose aria-label="Dokument schließen"><Cross color="#fff" /></DocumentClose>
        </DocumentTab>
      </DocumentBar>
    </Page>
  );
}
